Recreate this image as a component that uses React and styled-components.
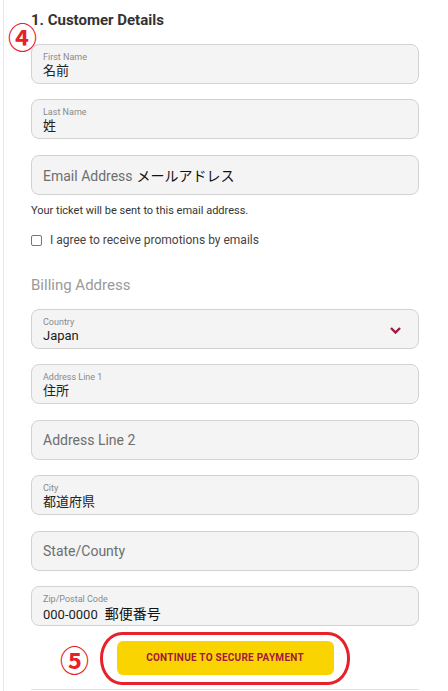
import React from 'react'
import styled, { createGlobalStyle } from 'styled-components'

const GlobalStyle = createGlobalStyle`
    html, body {
        margin: 0;
        padding: 0;
        background: #ffffff;
    }
    body {
        font-family: Roboto, "Noto Sans CJK JP", sans-serif;
        color: #333333;
    }
`

const Page = styled.div`
    position: relative;
    margin-left: 3px;
    border-left: 1px solid #e6e6e6;
    padding: 11px 0 0 27px;
    min-height: 691px;
    box-sizing: border-box;
`

const Form = styled.div`
    width: 388px;
    display: flex;
    flex-direction: column;
`

const Title = styled.h2`
    margin: 0;
    font-size: 15px;
    line-height: 18px;
    font-weight: 700;
    color: #333333;
`

const Marker = styled.span`
    position: absolute;
    left: ${props => props.left}px;
    top: ${props => props.top}px;
    font-family: "Noto Sans CJK JP", sans-serif;
    font-size: 29px;
    line-height: 29px;
    font-weight: 700;
    color: #e8202a;
`

const Field = styled.div`
    box-sizing: border-box;
    height: 40px;
    margin-top: ${props => props.gap || 15.4}px;
    background: #f4f4f4;
    border: 1px solid #d2d2d2;
    border-radius: 8px;
    padding: ${props => props.single ? '0 18px 0 11px' : '7px 18px 0 11px'};
    display: flex;
    flex-direction: ${props => props.single ? 'row' : 'column'};
    align-items: ${props => props.single ? 'center' : 'stretch'};
    justify-content: ${props => props.single ? 'space-between' : 'flex-start'};
    position: relative;
`

const FieldLabel = styled.span`
    font-size: 9px;
    line-height: 11px;
    color: #8a8a8a;
`

const FieldValue = styled.span`
    font-size: 13px;
    line-height: 16px;
    color: #222222;
`

const Placeholder = styled.span`
    font-size: 14px;
    color: #6e6e6e;
`

const Typed = styled.span`
    font-family: "Noto Sans CJK JP", sans-serif;
    font-size: 14px;
    color: #111111;
    margin-left: ${props => props.space || 4}px;
`

const Chevron = styled.svg`
    position: absolute;
    right: 17px;
    top: 17px;
`

const Helper = styled.p`
    margin: 9px 0 0;
    font-size: 11px;
    line-height: 14px;
    color: #333333;
`

const CheckRow = styled.label`
    margin-top: 14px;
    display: flex;
    align-items: center;
    gap: 8px;
    font-size: 12px;
    line-height: 16px;
    color: #444444;
`

const Box = styled.span`
    box-sizing: border-box;
    width: 11px;
    height: 11px;
    border: 1px solid #767676;
    border-radius: 2px;
    background: #ffffff;
`

const Subtitle = styled.h3`
    margin: 28px 0 0;
    font-size: 15px;
    line-height: 18px;
    font-weight: 400;
    color: #9a9a9a;
`

const ButtonWrap = styled.div`
    position: relative;
    margin-top: 15px;
    display: flex;
    justify-content: center;
`

const Button = styled.button`
    width: 217px;
    height: 34px;
    border: none;
    border-radius: 6px;
    background: #fad400;
    color: #a3173f;
    font-family: Roboto, sans-serif;
    font-size: 10px;
    font-weight: 700;
    letter-spacing: 0.25px;
    padding: 0;
`

const Ring = styled.span`
    position: absolute;
    left: 69px;
    top: -9px;
    width: 250px;
    height: 53px;
    box-sizing: border-box;
    border: 3px solid #e8202a;
    border-radius: 22px / 26px;
`

const Divider = styled.div`
    margin-top: 14px;
    height: 1px;
    background: #e2e2e2;
`

const TextField = ({ label, value, gap }) => (
    <Field gap={gap}>
        <FieldLabel>{label}</FieldLabel>
        <FieldValue>{value}</FieldValue>
    </Field>
)

const App = () => {
    return (
        <>
            <GlobalStyle />
            <Page>
                <Marker left={4} top={22}>④</Marker>
                <Form>
                    <Title>1. Customer Details</Title>
                    <TextField gap={15} label="First Name" value="名前" />
                    <TextField gap={15} label="Last Name" value="姓" />
                    <Field gap={16} single>
                        <span>
                            <Placeholder>Email Address</Placeholder>
                            <Typed>メールアドレス</Typed>
                        </span>
                    </Field>
                    <Helper>Your ticket will be sent to this email address.</Helper>
                    <CheckRow>
                        <Box />
                        I agree to receive promotions by emails
                    </CheckRow>
                    <Subtitle>Billing Address</Subtitle>
                    <Field gap={15}>
                        <FieldLabel>Country</FieldLabel>
                        <FieldValue>Japan</FieldValue>
                        <Chevron width="11" height="7" viewBox="0 0 11 7">
                            <path d="M1 1 L5.5 5.5 L10 1" fill="none" stroke="#9b1b3e" strokeWidth="2.4" />
                        </Chevron>
                    </Field>
                    <TextField label="Address Line 1" value="住所" />
                    <Field single>
                        <Placeholder>Address Line 2</Placeholder>
                    </Field>
                    <TextField label="City" value="都道府県" />
                    <Field single>
                        <Placeholder>State/County</Placeholder>
                    </Field>
                    <Field>
                        <FieldLabel>Zip/Postal Code</FieldLabel>
                        <FieldValue>
                            000-0000<Typed space={7}>郵便番号</Typed>
                        </FieldValue>
                    </Field>
                    <ButtonWrap>
                        <Marker left={29} top={4}>⑤</Marker>
                        <Ring />
                        <Button>CONTINUE TO SECURE PAYMENT</Button>
                    </ButtonWrap>
                    <Divider />
                </Form>
            </Page>
        </>
    )
}

export default App
